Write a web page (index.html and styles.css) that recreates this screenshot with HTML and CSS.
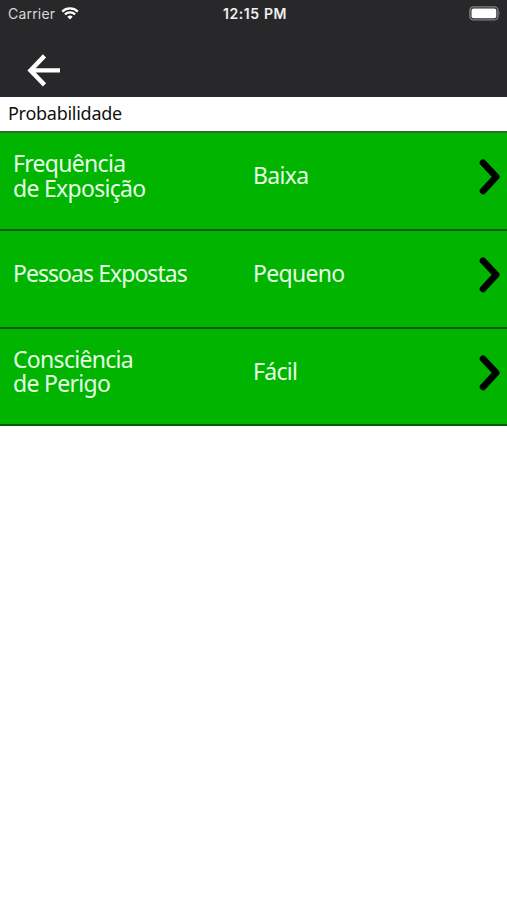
FILE: index.html
```html
<!DOCTYPE html>
<html lang="pt">
<head>
    <meta charset="UTF-8">
    <meta name="viewport" content="width=device-width, initial-scale=1.0">
    <title>Probabilidade</title>
    <link rel="stylesheet" href="styles.css">
</head>
<body>
    <header class="header">
        <div class="status-bar">
            <div class="carrier">
                <span>Carrier</span>
                <svg class="wifi" width="18" height="13" viewBox="0 0 18 13">
                    <path d="M1.2 4.6a11.2 11.2 0 0 1 15.6 0"></path>
                    <path d="M3.9 7.4a7.4 7.4 0 0 1 10.2 0"></path>
                    <path class="wifi-dot" d="M6.3 9.7a4 4 0 0 1 5.4 0L9 12.4z"></path>
                </svg>
            </div>
            <span class="time">12:15 PM</span>
            <svg class="battery" width="33" height="15" viewBox="0 0 33 15">
                <rect class="battery-case" x="0.9" y="0.9" width="28" height="13" rx="3.5"></rect>
                <rect class="battery-level" x="2.5" y="2.5" width="24.8" height="9.8" rx="2"></rect>
                <path class="battery-tip" d="M30.2 5.2q1.8 2.2 0 4.4z"></path>
            </svg>
        </div>
        <button class="back-btn" aria-label="Voltar">
            <svg width="34" height="34" viewBox="0 0 34 34">
                <path d="M17.5 2.9L3.5 17.4L17.5 31.9M3.5 17.4H33"></path>
            </svg>
        </button>
    </header>

    <h1>Probabilidade</h1>

    <ul class="list">
        <li class="row">
            <span class="label">Frequência<br>de Exposição</span>
            <span class="value">Baixa</span>
            <svg class="chevron" width="22" height="36" viewBox="0 0 22 36">
                <path d="M4 3.7L17.2 17.8L4 31.9"></path>
            </svg>
        </li>
        <li class="row">
            <span class="label label-single">Pessoas Expostas</span>
            <span class="value">Pequeno</span>
            <svg class="chevron" width="22" height="36" viewBox="0 0 22 36">
                <path d="M4 3.7L17.2 17.8L4 31.9"></path>
            </svg>
        </li>
        <li class="row">
            <span class="label">Consciência<br>de Perigo</span>
            <span class="value">Fácil</span>
            <svg class="chevron" width="22" height="36" viewBox="0 0 22 36">
                <path d="M4 3.7L17.2 17.8L4 31.9"></path>
            </svg>
        </li>
    </ul>
</body>
</html>
```
FILE: styles.css
```css
* {
    margin: 0;
    padding: 0;
    box-sizing: border-box;
}

body {
    font-family: 'Noto Sans', 'Open Sans', sans-serif;
    background: #fff;
    min-height: 100vh;
}

.header {
    height: 97px;
    background: #28282a;
}

.status-bar {
    display: grid;
    grid-template-columns: 1fr auto 1fr;
    align-items: center;
    height: 27px;
    padding: 0 5px 0 8px;
    font-family: Inter, sans-serif;
    font-size: 14px;
    color: #d8d8d8;
}

.carrier {
    display: flex;
    align-items: center;
    gap: 6px;
    letter-spacing: 0.2px;
}

.wifi {
    fill: none;
    stroke: #fff;
    stroke-width: 2.2;
}

.wifi-dot {
    fill: #fff;
    stroke: none;
}

.time {
    font-weight: 600;
    letter-spacing: 0.6px;
    color: #f0f0f0;
}

.battery {
    justify-self: end;
}

.battery-case {
    fill: none;
    stroke: #808082;
    stroke-width: 1.4;
}

.battery-level {
    fill: #fff;
}

.battery-tip {
    fill: #808082;
}

.back-btn {
    display: block;
    margin: 26px 0 0 27px;
    background: none;
    border: none;
    cursor: pointer;
}

.back-btn svg {
    display: block;
    fill: none;
    stroke: #fff;
    stroke-width: 4.4;
}

h1 {
    height: 34px;
    padding-left: 8px;
    font-size: 18px;
    font-weight: 400;
    line-height: 32px;
    letter-spacing: -0.27px;
    color: #111;
}

.list {
    list-style: none;
}

.row {
    display: grid;
    grid-template-columns: 240px 1fr auto;
    align-items: center;
    height: 98px;
    padding: 0 6px 8px 13px;
    background: #00b400;
    border-top: 2px solid #075c07;
    font-size: 23px;
    line-height: 24.5px;
    letter-spacing: -0.7px;
    color: #e6ffe6;
}

.row:first-child {
    border-top-color: #2f6b2f;
}

.row:last-child {
    height: 99px;
    border-bottom: 2px solid #075c07;
}

.label,
.value {
    padding-bottom: 3px;
}

.label-single {
    letter-spacing: -0.95px;
}

.chevron {
    fill: none;
    stroke: #000;
    stroke-width: 6.6;
    stroke-linecap: round;
    stroke-linejoin: round;
}
```
